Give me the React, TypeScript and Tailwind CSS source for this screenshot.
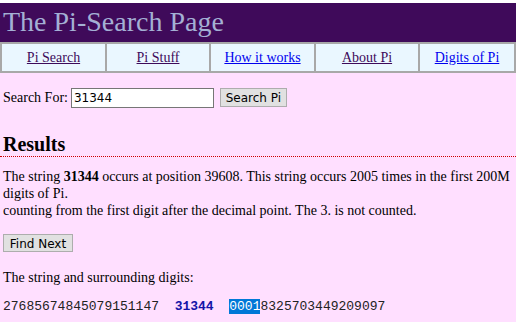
import { useState } from "react";

const navLinks = [
  { name: "Pi Search", visited: true },
  { name: "Pi Stuff", visited: true },
  { name: "How it works", visited: false },
  { name: "About Pi", visited: true },
  { name: "Digits of Pi", visited: false },
];

const serif = "font-['Liberation_Serif','Times_New_Roman',serif]";
const sans = "font-['DejaVu_Sans','Tahoma',sans-serif]";

const App = () => {
  const [query, setQuery] = useState("31344");

  return (
    <div className={`min-h-screen bg-[#ffdfff] ${serif}`}>
      <div className="h-[3px] bg-white" />

      {/* Title bar */}
      <div className="h-[39px] bg-[#3f0a5a] pl-[3px]">
        <h1 className="text-[28px] leading-[37px] text-[#a4b0d4]">The Pi-Search Page</h1>
      </div>

      {/* Nav */}
      <div className="grid grid-cols-[105px_104px_105px_104px_1fr] border-y-2 border-l-2 border-[#a8a8a8] bg-[#eaf7ff]">
        {navLinks.map((item) => (
          <div
            key={item.name}
            className="flex h-[27px] items-center justify-center border-r-2 border-[#a8a8a8] text-[14px]"
          >
            <a
              href="#"
              className={`underline ${item.visited ? "text-[#3d0a5a]" : "text-[#0000ee]"}`}
            >
              {item.name}
            </a>
          </div>
        ))}
      </div>

      {/* Search form */}
      <div className="mt-[14px] flex items-center pl-[3px] text-[14px] text-black">
        <span>Search For:</span>
        <input
          value={query}
          onChange={(e) => setQuery(e.target.value)}
          className={`ml-[3px] h-[20px] w-[143px] border border-[#767676] bg-white px-[2px] text-[12px] text-black ${sans}`}
        />
        <button
          className={`ml-[6px] h-[19px] w-[67px] border border-[#adadad] bg-[#e1e1e1] text-[12px] text-black ${sans}`}
        >
          Search Pi
        </button>
      </div>

      {/* Results */}
      <h2 className="mt-[25px] border-b border-dotted border-[#cc0000] pl-[3px] text-[20px] font-bold leading-[23px] text-black">
        Results
      </h2>

      <p className="mt-[11px] pl-[3px] text-[14px] leading-[17px] text-black">
        The string <b>31344</b> occurs at position 39608. This string occurs 2005 times in the first 200M
        <br />
        digits of Pi.
        <br />
        counting from the first digit after the decimal point. The 3. is not counted.
      </p>

      <button
        className={`ml-[3px] mt-[15px] h-[18px] w-[70px] border border-[#adadad] bg-[#e1e1e1] text-[12px] text-black ${sans}`}
      >
        Find Next
      </button>

      <p className="mt-[14px] pl-[3px] text-[14px] leading-[17px] text-black">
        The string and surrounding digits:
      </p>

      <pre className="mt-[13px] pl-[3px] font-['Liberation_Mono','Courier_New',monospace] text-[13px] leading-[16px] text-[#222]">
        27685674845079151147{"  "}
        <b className="text-[#1414a8]">31344</b>
        {"  "}
        <span className="bg-[#0078d7] text-white">0001</span>
        8325703449209097
      </pre>
    </div>
  );
};

export default App;
